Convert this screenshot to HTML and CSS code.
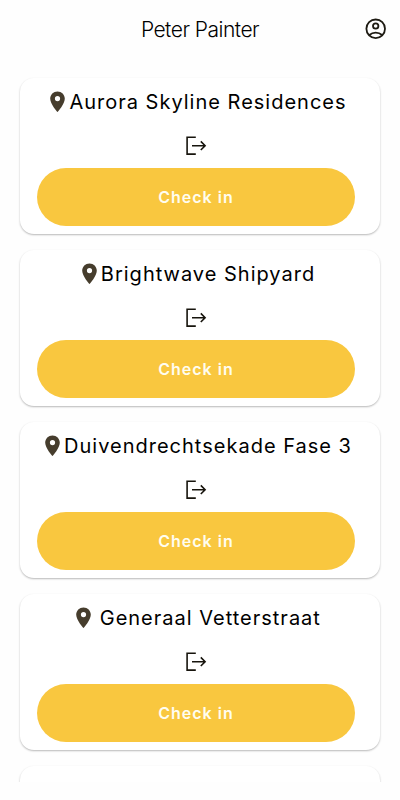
FILE: index.html
```html
<!DOCTYPE html>
<html lang="en">
<head>
<meta charset="utf-8">
<meta name="viewport" content="width=device-width, initial-scale=1">
<title>Peter Painter</title>
<link rel="stylesheet" href="styles.css">
</head>
<body>
<svg class="sprite" aria-hidden="true">
  <symbol id="pin" viewBox="0 0 24 24"><path d="M12.500 1.500C8.400 1.500 5.200 4.700 5.200 8.700c0 5.300 7.300 13.300 7.300 13.300s7.300-8 7.300-13.300c0-4-3.200-7.200-7.300-7.200zm0 9.700A2.600 2.600 0 1 1 12.500 6a2.600 2.600 0 0 1 0 5.200z"/></symbol>
  <symbol id="logout" viewBox="0 0 24 24"><path d="M11.800 3.300H3.100v16.800h8.700M8 11.700h13.200M16.800 7.400l4.300 4.300-4.300 4.300" fill="none" stroke="currentColor" stroke-width="1.600"/></symbol>
</svg>
<header class="topbar">
  <h1 class="topbar-title">Peter Painter</h1>
  <button class="account" type="button" aria-label="Account">
    <svg class="icon" viewBox="0 0 24 24" fill="none" stroke="currentColor" stroke-width="1.800"><circle cx="11.700" cy="11.800" r="9.300"/><circle cx="11.700" cy="9" r="2.700"/><path d="M5.300 18c3.700-3.200 9.100-3.200 12.800 0"/></svg>
  </button>
</header>
<main class="list">
  <article class="card">
    <h2 class="place"><svg class="icon pin"><use href="#pin"/></svg>Aurora Skyline Residences</h2>
    <svg class="icon logout"><use href="#logout"/></svg>
    <button class="check" type="button">Check in</button>
  </article>
  <article class="card">
    <h2 class="place"><svg class="icon pin"><use href="#pin"/></svg>Brightwave Shipyard</h2>
    <svg class="icon logout"><use href="#logout"/></svg>
    <button class="check" type="button">Check in</button>
  </article>
  <article class="card">
    <h2 class="place"><svg class="icon pin"><use href="#pin"/></svg>Duivendrechtsekade Fase 3</h2>
    <svg class="icon logout"><use href="#logout"/></svg>
    <button class="check" type="button">Check in</button>
  </article>
  <article class="card">
    <h2 class="place"><svg class="icon pin"><use href="#pin"/></svg>&thinsp;Generaal Vetterstraat</h2>
    <svg class="icon logout"><use href="#logout"/></svg>
    <button class="check" type="button">Check in</button>
  </article>
  <article class="card"></article>
</main>
</body>
</html>
```
FILE: styles.css
```css
* { box-sizing: border-box; }
body {
  display: flex;
  flex-direction: column;
  height: 100vh;
  margin: 0;
  padding-bottom: 18px;
  background: #fefefe;
  color: #000;
  font-family: Inter, "Liberation Sans", sans-serif;
}
.sprite { position: absolute; width: 0; height: 0; }
.icon { display: block; flex: none; width: 24px; height: 24px; }
button { border: 0; font: inherit; cursor: pointer; }
.topbar {
  display: grid;
  grid-template-columns: 1fr auto 1fr;
  align-items: center;
  height: 60px;
  padding: 0 12px;
}
.topbar-title {
  grid-column: 2;
  margin: 0;
  font-size: 21px;
  font-weight: 300;
  line-height: 28px;
  letter-spacing: -0.5px;
}
.account {
  justify-self: end;
  padding: 0 0 2px;
  background: none;
  color: #1d1a12;
}
.list {
  display: flex;
  flex: 1;
  flex-direction: column;
  gap: 16px;
  min-height: 0;
  padding: 18px 20px 0;
  overflow-y: auto;
  scrollbar-width: none;
}
.card {
  display: flex;
  flex: none;
  flex-direction: column;
  align-items: center;
  min-height: 156px;
  padding: 8px 25px 8px 17px;
  border-radius: 14px;
  background: #fff;
  box-shadow: 0 1px 2px rgba(0, 0, 0, .28);
}
.place {
  display: flex;
  align-items: center;
  margin: 0 0 16px;
  font-size: 20px;
  font-weight: 400;
  line-height: 32px;
  letter-spacing: 1px;
  white-space: nowrap;
}
.pin { fill: #463d2d; }
.logout { margin-bottom: 10px; color: #17140d; }
.check {
  width: 100%;
  height: 58px;
  border-radius: 29px;
  background: #f9c73f;
  color: #fffdf0;
  font-size: 16px;
  font-weight: 600;
  letter-spacing: 1px;
}
```
